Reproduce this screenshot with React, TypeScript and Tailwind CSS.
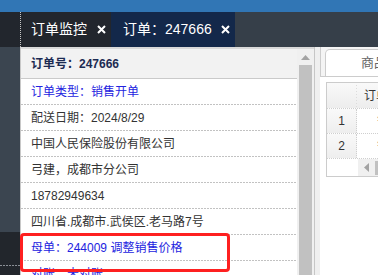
import React from "react";

const font = { fontFamily: '"Liberation Sans", "Noto Sans CJK SC", sans-serif' };

function XIcon() {
  return (
    <svg width="9" height="9" viewBox="0 0 9 9" className="block">
      <path d="M1 1 L8 8 M8 1 L1 8" stroke="#ffffff" strokeWidth="2" strokeLinecap="butt" />
    </svg>
  );
}

function Dots() {
  return (
    <div className="h-[1px] shrink-0 bg-[linear-gradient(to_right,#c2c2c2_66%,transparent_66%)] bg-[length:3px_1px] bg-repeat-x" />
  );
}

const rows: { text: string; blue?: boolean }[] = [
  { text: "订单类型：销售开单", blue: true },
  { text: "配送日期：2024/8/29" },
  { text: "中国人民保险股份有限公司" },
  { text: "弓建，成都市分公司" },
  { text: "18782949634" },
  { text: "四川省.成都市.武侯区.老马路7号" },
  { text: "母单：244009 调整销售价格", blue: true },
  { text: "对账：未对账", blue: true },
];

export default function App() {
  return (
    <div className="relative w-[378px] h-[275px] overflow-hidden bg-white" style={font}>
      <div className="h-[12px] bg-[#3176b5]" />
      <div className="h-[35px] flex bg-[#363f49]">
        <div className="w-[20px] bg-[#22262d]" />
        <div className="w-[91px] bg-[#22262d] border-l border-dotted border-[#c8c8c8] flex items-center pl-[10px] text-white text-[14px]">
          <span>订单监控</span>
          <span className="ml-[10px]"><XIcon /></span>
        </div>
        <div className="w-[124px] bg-[#13284a] flex items-center pl-[12px] text-white text-[14px]">
          <span>订单：247666</span>
          <span className="ml-[9px]"><XIcon /></span>
        </div>
      </div>
      <div className="flex h-[228px]">
        <div className="w-[20px] flex flex-col">
          <div className="h-[185px] shrink-0 bg-[#3b4550]" />
          <div className="flex-1 bg-[#22262c] pt-[33px]">
            <div className="h-[1px] bg-[linear-gradient(to_right,#8a8f96_66%,transparent_66%)] bg-[length:3px_1px] bg-repeat-x" />
          </div>
        </div>
        <div className="w-[1px] bg-[#c8c8c8]" />
        <div className="w-[293px] flex border-t-2 border-[#d9d9d9]">
          <div className="w-[276px] flex flex-col overflow-hidden">
            <div className="h-[30px] shrink-0 bg-[#f2f2f2] border-b border-[#cacaca] flex items-center pl-[10px] text-[12px] font-bold text-[#1c2b52]">
              订单号：247666
            </div>
            {rows.map((r, i) => (
              <div key={i} className="shrink-0">
                <div
                  className={
                    "h-[25px] flex items-center pl-[10px] text-[12px] whitespace-nowrap " +
                    (r.blue ? "text-[#2323e0]" : "text-[#333333]")
                  }
                >
                  {r.text}
                </div>
                <Dots />
              </div>
            ))}
          </div>
          <div className="w-[17px] bg-[#f0f0f0] flex flex-col">
            <div className="h-[16px] shrink-0 flex items-center justify-center">
              <svg width="9" height="5" viewBox="0 0 9 5"><path d="M0 5 L4.5 0 L9 5 Z" fill="#a3a3a3" /></svg>
            </div>
            <div className="flex-1 ml-[2px] mr-[2px] bg-[#c1c1c1]" />
          </div>
        </div>
        <div className="w-[1px] bg-[#c6c6c6]" />
        <div className="w-[5px] bg-[#efefef]" />
        <div className="flex-1 bg-white flex flex-col min-w-0 overflow-hidden">
          <div className="h-[30px] shrink-0 bg-[#f4f4f4] border-l border-b border-[#cccccc] flex items-end pl-[4px]">
            <div className="h-[27px] w-[80px] shrink-0 bg-white border border-b-0 border-[#cccccc] rounded-tl-[5px] flex items-center pl-[35px] text-[13px] text-[#666666] whitespace-nowrap overflow-hidden">
              商品明细
            </div>
          </div>
          <div className="pt-[5px] pl-[6px]">
            <div className="border-l border-t border-b border-[#cccccc] w-[80px] text-[12px] text-[#333333]">
              <div className="h-[25px] flex bg-[linear-gradient(to_bottom,#f9f9f9,#ededed)]">
                <div className="w-[30px] shrink-0 h-full bg-[linear-gradient(to_bottom,#dcdcdc_50%,transparent_50%)] bg-[length:1px_3px] bg-repeat-y bg-right" />
                <div className="flex items-center pl-[7px] whitespace-nowrap">订单号</div>
              </div>
              {["1", "2"].map((n) => (
                <div key={n} className="border-t border-dotted border-[#cfcfcf] h-[25px] flex">
                  <div className="w-[30px] shrink-0 h-full flex items-center justify-center bg-[linear-gradient(to_bottom,#f9f9f9,#eeeeee)] border-r border-dotted border-[#cfcfcf]">
                    {n}
                  </div>
                  <div className="flex items-center pl-[20px] whitespace-nowrap">销售</div>
                </div>
              ))}
              <div className="border-t border-dotted border-[#cfcfcf] h-[18px] flex">
                <div className="w-[31px] shrink-0" />
                <div className="flex-1 bg-[#f0f0f0] flex items-center pl-[6px]">
                  <svg width="5" height="9" viewBox="0 0 5 9"><path d="M5 0 L0 4.5 L5 9 Z" fill="#a3a3a3" /></svg>
                  <div className="ml-[6px] h-[14px] flex-1 bg-[#c1c1c1]" />
                </div>
              </div>
            </div>
          </div>
        </div>
      </div>
      <div className="absolute left-[20px] top-[233px] w-[210px] h-[39px] border-[3px] border-[#fe2020] rounded-[4px]" />
    </div>
  );
}
